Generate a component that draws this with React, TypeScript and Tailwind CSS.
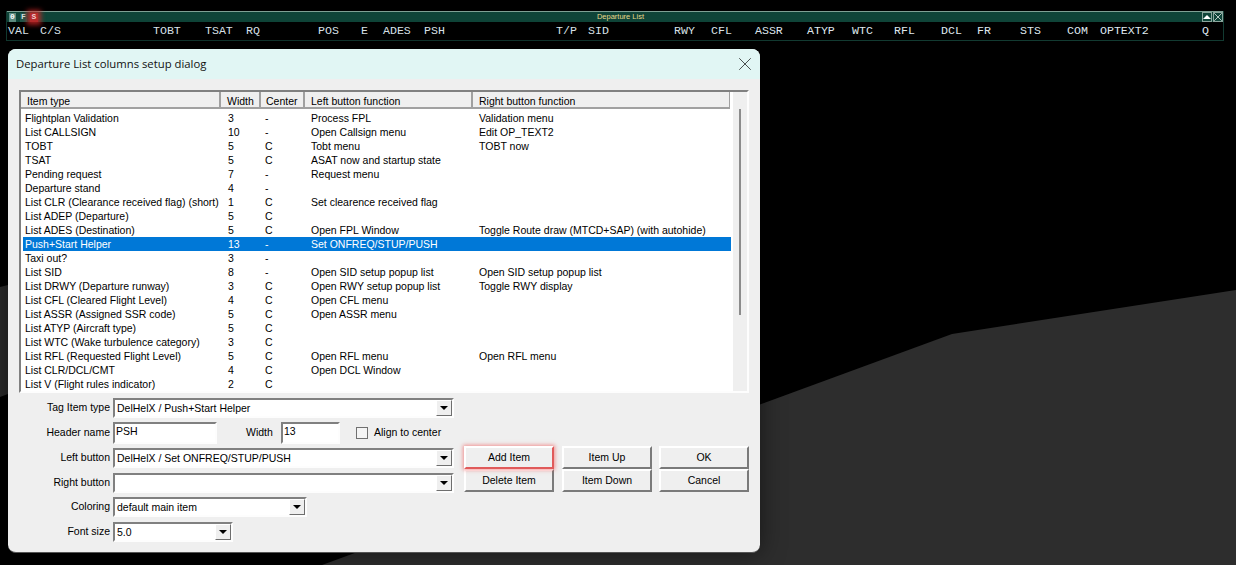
import React from 'react';
import { X } from 'lucide-react';

const headerCols: [string, string][] = [
  ['VAL', 'w-[32px]'], ['C/S', 'w-[113px]'], ['TOBT', 'w-[52px]'], ['TSAT', 'w-[41px]'], ['RQ', 'w-[72px]'],
  ['POS', 'w-[43px]'], ['E', 'w-[22px]'], ['ADES', 'w-[41px]'], ['PSH', 'w-[132px]'], ['T/P', 'w-[32px]'],
  ['SID', 'w-[86px]'], ['RWY', 'w-[37px]'], ['CFL', 'w-[44px]'], ['ASSR', 'w-[52px]'], ['ATYP', 'w-[45px]'],
  ['WTC', 'w-[42px]'], ['RFL', 'w-[47px]'], ['DCL', 'w-[36px]'], ['FR', 'w-[43px]'], ['STS', 'w-[47px]'],
  ['COM', 'w-[33px]'], ['OPTEXT2', 'w-[102px]'], ['Q', 'w-[12px]'],
];

const rows = [
  ['Flightplan Validation', '3', '-', 'Process FPL', 'Validation menu'],
  ['List CALLSIGN', '10', '-', 'Open Callsign menu', 'Edit OP_TEXT2'],
  ['TOBT', '5', 'C', 'Tobt menu', 'TOBT now'],
  ['TSAT', '5', 'C', 'ASAT now and startup state', ''],
  ['Pending request', '7', '-', 'Request menu', ''],
  ['Departure stand', '4', '-', '', ''],
  ['List CLR (Clearance received flag) (short)', '1', 'C', 'Set clearence received flag', ''],
  ['List ADEP (Departure)', '5', 'C', '', ''],
  ['List ADES (Destination)', '5', 'C', 'Open FPL Window', 'Toggle Route draw (MTCD+SAP) (with autohide)'],
  ['Push+Start Helper', '13', '-', 'Set ONFREQ/STUP/PUSH', ''],
  ['Taxi out?', '3', '-', '', ''],
  ['List SID', '8', '-', 'Open SID setup popup list', 'Open SID setup popup list'],
  ['List DRWY (Departure runway)', '3', 'C', 'Open RWY setup popup list', 'Toggle RWY display'],
  ['List CFL (Cleared Flight Level)', '4', 'C', 'Open CFL menu', ''],
  ['List ASSR (Assigned SSR code)', '5', 'C', 'Open ASSR menu', ''],
  ['List ATYP (Aircraft type)', '5', 'C', '', ''],
  ['List WTC (Wake turbulence category)', '3', 'C', '', ''],
  ['List RFL (Requested Flight Level)', '5', 'C', 'Open RFL menu', 'Open RFL menu'],
  ['List CLR/DCL/CMT', '4', 'C', 'Open DCL Window', ''],
  ['List V (Flight rules indicator)', '2', 'C', '', ''],
];

function Combo({ value, className }: { value: string; className: string }) {
  return (
    <div className={`flex h-[20px] items-center border-2 border-t-[#808080] border-l-[#808080] border-r-[#fdfdfd] border-b-[#fdfdfd] bg-white pl-[2px] pr-0 ${className}`}>
      <span className="flex-1 truncate pt-[1px]">{value}</span>
      <span className="flex h-[16px] w-[16px] shrink-0 items-center justify-center border border-t-white border-l-white border-r-[#6e6e6e] border-b-[#6e6e6e] bg-[#efefef]">
        <span className="h-0 w-0 border-x-[4px] border-t-[4px] border-x-transparent border-t-black" />
      </span>
    </div>
  );
}

function Field({ value, className }: { value: string; className: string }) {
  return (
    <div className={`h-[22px] border-2 border-t-[#808080] border-l-[#808080] border-r-[#fdfdfd] border-b-[#fdfdfd] bg-white pl-[1px] leading-[14px] ${className}`}>
      {value}
    </div>
  );
}

function Btn({ label, className = '' }: { label: string; className?: string }) {
  return (
    <div className={`flex h-[23px] w-[90px] items-center justify-center border-2 border-t-white border-l-white border-r-[#7a7a7a] border-b-[#7a7a7a] bg-[#efefef] ${className}`}>
      {label}
    </div>
  );
}

function Label({ text }: { text: string }) {
  return <div className="w-[102px] shrink-0 pr-0 text-right">{text}</div>;
}

export default function App() {
  return (
    <div className="relative h-[565px] w-[1236px] overflow-hidden bg-black font-['Liberation_Sans',sans-serif] text-[10.5px] text-black">
      {/* radar background */}
      <svg className="absolute inset-0" width="1236" height="565">
        <polygon points="322,565 952,334 1236,290 1236,565" fill="#2d2d2d" />
        <polygon points="0,287 8,285 8,394 0,397" fill="#2b2b2b" />
      </svg>

      {/* Departure list strip */}
      <div className="relative ml-[6px] mt-[11px] h-[30px] w-[1218px] border-x border-b border-[#123a31]">
        <div className="relative flex h-[11px] items-center border-t border-[#7fa094] bg-[#0f4438]">
          <div className="ml-[2px] flex h-[9px] w-[7px] items-center justify-center bg-[#5d8a7f] font-['Liberation_Mono',monospace] text-[8px] font-bold text-white">0</div>
          <div className="ml-[4px] flex h-[9px] w-[7px] items-center justify-center bg-[#1f5549] font-['Liberation_Mono',monospace] text-[8px] font-bold text-[#d8e4e0]">F</div>
          <div className="ml-[3px] flex h-[9px] w-[8px] items-center justify-center bg-[#b52a2a] font-['Liberation_Mono',monospace] text-[8px] font-bold text-[#f0d0d0] shadow-[0_0_5px_3px_rgba(220,40,40,0.75)]">S</div>
          <div className="flex-1 pl-[1px] text-center font-['Liberation_Sans',sans-serif] text-[7.5px] leading-none text-[#e8d98a]">Departure List</div>
          <div className="flex h-[10px] w-[10px] items-center justify-center border border-[#8aa59c] bg-[#0f4438]">
            <span className="h-0 w-0 border-x-[4px] border-b-[4px] border-x-transparent border-b-white" />
          </div>
          <div className="ml-px flex h-[10px] w-[10px] items-center justify-center overflow-hidden border border-[#8aa59c] bg-[#0f4438]">
            <X size={14} strokeWidth={1.2} color="#ffffff" className="shrink-0" />
          </div>
        </div>
        <div className="flex h-[18px] items-center pl-[1px] font-['Liberation_Mono',monospace] text-[11.6px] leading-none text-[#dfe8ee]">
          {headerCols.map(([label, w]) => (
            <span key={label} className={`shrink-0 ${w}`}>{label}</span>
          ))}
        </div>
      </div>

      {/* Setup dialog */}
      <div className="relative ml-[8px] mt-[8px] h-[504px] w-[752px] overflow-hidden rounded-lg border-b border-[#555555] bg-[#efefef] shadow-[0_0_24px_rgba(0,0,0,0.5)]">
        <div className="flex h-[30px] items-center justify-between bg-[#e1f6f4] pl-[8px] pr-[4px] font-['Open_Sans',sans-serif] text-[11.3px] text-[#111111]">
          <span>Departure List columns setup dialog</span>
          <X size={22} strokeWidth={0.8} color="#111111" className="-mt-[1px]" />
        </div>

        <div className="ml-[11px] mt-[11px] h-[303px] w-[730px] border-2 border-t-[#808080] border-l-[#808080] border-r-[#fdfdfd] border-b-[#fdfdfd]">
          <div className="flex h-full">
            <div className="flex w-[710px] flex-col bg-white">
              <div className="flex h-[17px] w-[709px] shrink-0 bg-[#efefef] leading-[19px]">
                <div className="w-[200px] border-r-2 border-b-2 border-[#a0a0a0] pl-[6px]">Item type</div>
                <div className="w-[40px] border-r-2 border-b-2 border-[#a0a0a0] pl-[6px]">Width</div>
                <div className="w-[44px] border-r-2 border-b-2 border-[#a0a0a0] pl-[5px]">Center</div>
                <div className="w-[168px] border-r-2 border-b-2 border-[#a0a0a0] pl-[6px]">Left button function</div>
                <div className="w-[257px] border-r border-b-2 border-[#a0a0a0] pl-[6px]">Right button function</div>
              </div>
              <div className="pt-[2px]">
                {rows.map((r) => {
                  const selected = r[0] === 'Push+Start Helper';
                  return (
                    <div key={r[0]} className={`ml-[2px] flex h-[14px] w-[708px] items-center leading-[14px] ${selected ? 'bg-[#0078d7] text-white' : ''}`}>
                      <span className="w-[198px] shrink-0 whitespace-nowrap pl-[2px]">{r[0]}</span>
                      <span className="w-[40px] shrink-0 pl-[7px]">{r[1]}</span>
                      <span className="w-[43px] shrink-0 pl-[4px]">{r[2]}</span>
                      <span className="w-[168px] shrink-0 whitespace-nowrap pl-[7px]">{r[3]}</span>
                      <span className="flex-1 whitespace-nowrap pl-[7px]">{r[4]}</span>
                    </div>
                  );
                })}
              </div>
            </div>
            <div className="flex w-[16px] flex-1 flex-col border-l-2 border-white bg-[#efefef] pt-[17px] pl-[6px]">
              <div className="h-[206px] w-[2px] bg-[#8c8c8c]" />
            </div>
          </div>
        </div>

        <div className="mt-[5px] flex">
          <div className="w-[446px] shrink-0">
            <div className="flex items-center gap-[3px]">
              <Label text="Tag Item type" />
              <Combo value="DelHelX / Push+Start Helper" className="w-[341px]" />
            </div>
            <div className="mt-[4px] flex items-center gap-[3px]">
              <Label text="Header name" />
              <Field value="PSH" className="w-[104px]" />
              <div className="ml-[26px] w-[32px]">Width</div>
              <Field value="13" className="w-[59px]" />
              <div className="ml-[13px] h-[12px] w-[12px] border border-[#707070] bg-[#f4f4f4]" />
              <div className="ml-[3px]">Align to center</div>
            </div>
            <div className="mt-[4px] flex items-center gap-[3px]">
              <Label text="Left button" />
              <Combo value="DelHelX / Set ONFREQ/STUP/PUSH" className="w-[341px]" />
            </div>
            <div className="mt-[5px] flex items-center gap-[3px]">
              <Label text="Right button" />
              <Combo value="" className="w-[341px]" />
            </div>
            <div className="mt-[4px] flex items-center gap-[3px]">
              <Label text="Coloring" />
              <Combo value="default main item" className="w-[194px]" />
            </div>
            <div className="mt-[5px] flex items-center gap-[3px]">
              <Label text="Font size" />
              <Combo value="5.0" className="w-[120px]" />
            </div>
          </div>

          <div className="ml-[10px] mt-[48px] flex">
            <div className="mr-[8px] flex flex-col">
              <Btn label="Add Item" className="relative z-10 border-r-[#e05a5a] border-b-[#e05a5a] shadow-[0_0_4px_1px_rgba(240,80,80,0.6)]" />
              <Btn label="Delete Item" />
            </div>
            <div className="mr-[7px] flex flex-col">
              <Btn label="Item Up" />
              <Btn label="Item Down" />
            </div>
            <div className="flex flex-col">
              <Btn label="OK" className="border-t-[#6e6e6e] border-l-[#6e6e6e]" />
              <Btn label="Cancel" />
            </div>
          </div>
        </div>
      </div>
    </div>
  );
}
